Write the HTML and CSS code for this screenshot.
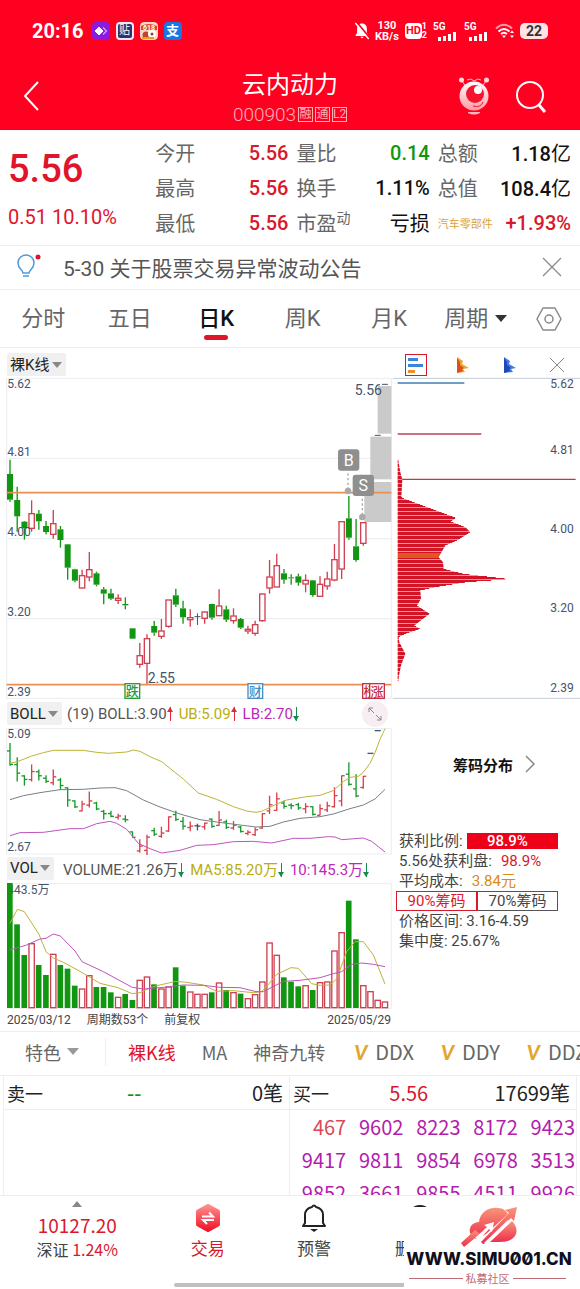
FILE: index.html
```
<!DOCTYPE html>
<html lang="zh-CN">
<head>
  <meta charset="UTF-8">
  <meta name="viewport" content="width=device-width, initial-scale=1.0">
  <title>云内动力 000903</title>
  <link rel="stylesheet" href="styles.css">
</head>
<body>

  <!-- Header -->
  <header class="header">
    <div class="status-bar">
      <span class="clock">20:16</span>
      <svg class="app-icon" viewBox="0 0 18 18"><rect width="18" height="18" rx="4" fill="#8a1be0"/><path d="M7 5l4 4-4 4-4-4z" fill="#fff" stroke="#fff" stroke-linejoin="round"/><path d="M11 5.500l3.500 3.500-3.500 3.500" fill="none" stroke="#d9a8ff" stroke-width="1.200"/></svg>
      <span class="app-icon app-tie">贴</span>
      <svg class="app-icon" viewBox="0 0 18 18"><rect width="18" height="18" rx="4" fill="#f6d9c4"/><path d="M1 4q8-4 16 0v4H1z" fill="#e2452f"/><text x="9" y="8" font-size="7" font-weight="700" text-anchor="middle" fill="#fff">618</text><circle cx="6" cy="13" r="3.500" fill="#c7422a"/><circle cx="12" cy="12" r="4" fill="#fff"/><circle cx="12" cy="12" r="1.500" fill="#8a4a30"/><path d="M2 16h12" stroke="#e0a020" stroke-width="2"/></svg>
      <span class="app-icon app-pay">支</span>
      <span class="spacer"></span>
      <svg class="mute" viewBox="0 0 18 20"><path d="M9 1.500c3.800 0 5.500 2.700 5.500 6v4.500l2 3.500h-15l2-3.500V7.500c0-3.300 1.700-6 5.500-6zM7 16.500h4l-2 2z" fill="#fff"/><path d="M3 0l15 18" stroke="#ff0020" stroke-width="2"/><path d="M1.500 1l15 18" stroke="#fff" stroke-width="1.500"/></svg>
      <span class="speed">130<br>KB/s</span>
      <span class="hd"><b>HD</b><i>1<br>2</i></span>
      <span class="signal">5G<svg viewBox="0 0 20 9"><path d="M1 5h3v4H1zM6 4h3v5H6zM11 2h3v7h-3zM16 0h3v9h-3z" fill="#fff"/></svg></span>
      <span class="signal">5G<svg viewBox="0 0 20 9"><path d="M1 5h3v4H1zM6 4h3v5H6zM11 2h3v7h-3zM16 0h3v9h-3z" fill="#fff"/></svg></span>
      <svg class="wifi" viewBox="0 0 20 18"><g fill="none" stroke="#fff" stroke-width="2"><path d="M1 6.500q8-7.500 16 0" opacity=".6"/><path d="M3.500 9.500q5.500-5 11 0"/><path d="M6 12q3-2.500 6 0"/></g><path d="M7 13.500h4l-2 2.500zM15 11l2-2.500 2 2.500zM15 13.500h4l-2 2.500z" fill="#fff"/></svg>
      <span class="battery">22</span>
    </div>
    <nav class="nav">
      <button class="icon-button" aria-label="返回"><svg width="20" height="34" viewBox="0 0 20 34"><path d="M16 3L3 17l13 14" fill="none" stroke="#fff" stroke-width="2"/></svg></button>
      <div class="title">
        <h1>云内动力</h1>
        <p>000903<span class="tag">融</span><span class="tag">通</span><span class="tag">L2</span></p>
      </div>
      <button class="icon-button robot" aria-label="助手"><svg width="32" height="40" viewBox="0 0 32 40"><defs><linearGradient id="ball" x2="0" y2="1"><stop offset="0" stop-color="#fff"/><stop offset="1" stop-color="#ff9aa2"/></linearGradient></defs><path d="M4 5l4 6M28 5l-4 6M9 4l4-1 3 2 4-2 3 1" fill="none" stroke="#ffc4c8"/><circle cx="3.500" cy="4" r="2.500" fill="#ffd9dc"/><circle cx="28.500" cy="4" r="2.500" fill="#ffd9dc"/><circle cx="16" cy="20" r="14.500" fill="url(#ball)"/><circle cx="17" cy="18" r="9" fill="#f5142e"/><circle cx="20" cy="14" r="4" fill="#fff"/><path d="M15 30q8 2 10-4" fill="none" stroke="#e8182c"/><path d="M10 36h12v1q-6 3-12 0z" fill="#ffb9be"/></svg></button>
      <button class="icon-button" aria-label="搜索"><svg width="32" height="34" viewBox="0 0 32 34"><circle cx="15" cy="16" r="13" fill="none" stroke="#fff" stroke-width="2"/><path d="M24 26l6 7" stroke="#fff" stroke-width="3"/></svg></button>
    </nav>
  </header>

  <!-- Quote -->
  <section class="quote">
    <div class="price">
      <strong>5.56</strong>
      <span>0.51 10.10%</span>
    </div>
    <dl class="figures">
      <div><dt>今开</dt><dd class="up">5.56</dd></div>
      <div><dt>量比</dt><dd class="down">0.14</dd></div>
      <div><dt>总额</dt><dd>1.18<span>亿</span></dd></div>
      <div><dt>最高</dt><dd class="up">5.56</dd></div>
      <div><dt>换手</dt><dd>1.11%</dd></div>
      <div><dt>总值</dt><dd>108.4<span>亿</span></dd></div>
      <div><dt>最低</dt><dd class="up">5.56</dd></div>
      <div><dt>市盈<sup>动</sup></dt><dd><span>亏损</span></dd></div>
      <div><dt class="sector">汽车零部件</dt><dd class="up">+1.93%</dd></div>
    </dl>
  </section>

  <!-- Notice -->
  <section class="notice">
    <svg width="28" height="26" viewBox="0 0 28 26"><path d="M8 19c0-3-5-4-5-10a8 8 0 0 1 16 0c0 6-5 7-5 10z M8 22h6" fill="none" stroke="#4a9ae0" stroke-width="1.500"/><circle cx="23" cy="3" r="2.500" fill="#d8182c"/></svg>
    <a href="#notice">5-30 关于股票交易异常波动公告</a>
    <button class="icon-button" aria-label="关闭"><svg width="20" height="20" viewBox="0 0 20 20"><path d="M1 1l18 18M19 1L1 19" stroke="#888" stroke-width="1.200"/></svg></button>
  </section>

  <!-- Period tabs -->
  <nav class="tabs">
    <button>分时</button>
    <button>五日</button>
    <button class="active">日K</button>
    <button>周K</button>
    <button>月K</button>
    <label class="dropdown"><select aria-label="周期"><option>周期</option></select></label>
    <button aria-label="设置"><svg width="26" height="26" viewBox="0 0 26 26" fill="none" stroke="#888" stroke-width="1.500"><path d="M7 2h12l6 11-6 11H7L1 13z" stroke-linejoin="round"/><circle cx="13" cy="13" r="4"/></svg></button>
  </nav>

  <!-- Charts -->
  <main class="charts">
    <div class="chart-column">
      <div class="toolbar">
        <label class="dropdown chip"><select aria-label="主图"><option>裸K线</option></select></label>
      </div>
      <svg id="candles" viewBox="0 0 1176 972"></svg>

      <div class="toolbar boll">
        <label class="dropdown chip"><select aria-label="指标"><option>BOLL</option></select></label>
        <span>(19) BOLL:3.90<i class="arrow-up"></i></span>
        <span class="yellow">UB:5.09<i class="arrow-up"></i></span>
        <span class="purple">LB:2.70<i class="arrow-down"></i></span>
        <button class="expand" aria-label="展开"><svg width="16" height="16" viewBox="0 0 16 16" fill="none" stroke="#888"><path d="M7 7L2 2M2 6V2h4M9 9l5 5M14 10v4h-4"/></svg></button>
      </div>
      <svg id="boll" viewBox="0 84 1176 381"></svg>

      <div class="toolbar vol">
        <label class="dropdown chip"><select aria-label="副图"><option>VOL</option></select></label>
        <span>VOLUME:21.26万<i class="arrow-down"></i></span>
        <span class="yellow">MA5:85.20万<i class="arrow-down"></i></span>
        <span class="purple">10:145.3万<i class="arrow-down"></i></span>
      </div>
      <svg id="volume" viewBox="0 84 1176 378"></svg>

      <div class="dates">
        <span>2025/03/12</span>
        <span>周期数53个</span>
        <span>前复权</span>
        <span>2025/05/29</span>
      </div>
    </div>

    <aside class="chips">
      <div class="chip-tools">
        <button class="selected" aria-label="筹码"><svg width="16" height="16" viewBox="0 0 16 16"><path d="M0 1h10v3H0z" fill="#3c86d8"/><path d="M0 7h15v3H0z" fill="#3c86d8"/><path d="M0 13h7v3H0z" fill="#e8922c"/></svg></button>
        <button aria-label="火焰筹码"><svg width="12" height="16" viewBox="0 0 12 16"><path d="M0 0l6 4-1 3 7 4-6 1 2 3-8 1z" fill="#f5a030"/><path d="M0 1l3 4v3l4 3-2 1 1 2-6 2z" fill="#d8501c"/></svg></button>
        <button aria-label="活跃筹码"><svg width="12" height="16" viewBox="0 0 12 16"><path d="M0 0l6 4-1 3 7 4-5 1 2 3-9 1z" fill="#3f7be8"/><path d="M0 1l3 4v3l4 3-2 1 1 2-6 2z" fill="#2347b8"/></svg></button>
        <button aria-label="关闭筹码"><svg width="16" height="16" viewBox="0 0 16 16"><path d="M1 1l14 14M15 1L1 15" stroke="#888"/></svg></button>
      </div>
      <svg id="profile" viewBox="6 0 564 972"></svg>
      <a class="chip-link" href="#chips">筹码分布<svg width="10" height="18" viewBox="0 0 10 18"><path d="M1 1l8 8-8 8" fill="none" stroke="#888" stroke-width="1.500"/></svg></a>
      <div class="chip-info">
        <p>获利比例:<span class="meter">98.9%</span></p>
        <p>5.56处获利盘: <span class="value up">98.9%</span></p>
        <p>平均成本: <span class="value orange">3.84元</span></p>
        <div class="switch"><button class="selected">90%筹码</button><button>70%筹码</button></div>
        <p>价格区间: 3.16-4.59</p>
        <p>集中度: 25.67%</p>
      </div>
    </aside>
  </main>

  <!-- Indicators -->
  <nav class="indicators">
    <label class="dropdown"><select aria-label="特色"><option>特色</option></select></label>
    <button class="active">裸K线</button>
    <button>MA</button>
    <button>神奇九转</button>
    <button class="vip"><b>V</b>DDX</button>
    <button class="vip"><b>V</b>DDY</button>
    <button class="vip"><b>V</b>DDZ</button>
  </nav>

  <!-- Orders -->
  <section class="orders">
    <div class="side">
      <div class="best"><span>卖一</span><span class="down">--</span><span>0笔</span></div>
    </div>
    <div class="side">
      <div class="best"><span>买一</span><span class="up">5.56</span><span>17699笔</span></div>
      <table>
        <tr><td class="small">467</td><td>9602</td><td>8223</td><td>8172</td><td>9423</td></tr>
        <tr><td>9417</td><td>9811</td><td>9854</td><td>6978</td><td>3513</td></tr>
        <tr><td>9852</td><td>3661</td><td>9855</td><td>4511</td><td>9926</td></tr>
      </table>
    </div>
  </section>

  <!-- Bottom bar -->
  <footer class="bottom">
    <a class="index" href="#index">
      <i class="triangle"></i>
      <strong>10127.20</strong>
      <span>深证 <em>1.24%</em></span>
    </a>
    <a class="trade" href="#trade">
      <svg width="26" height="28" viewBox="0 0 26 28"><defs><linearGradient id="hex" x2="0" y2="1"><stop offset="0" stop-color="#ff8c88"/><stop offset="1" stop-color="#f0142c"/></linearGradient></defs><path d="M13 2l10 5.500v13L13 26 3 20.500v-13z" fill="url(#hex)" stroke="url(#hex)" stroke-width="4" stroke-linejoin="round"/><path d="M7 12.500h11l-4-4M19 16H8l4 4" fill="none" stroke="#fff" stroke-width="2"/></svg>
      <span>交易</span>
    </a>
    <a href="#alert">
      <svg width="26" height="28" viewBox="0 0 26 28"><path d="M4 19V11c0-5 3-7 7-8q2-3 4 0c4 1 7 3 7 8v8l2 3H2z" fill="none" stroke="#222" stroke-width="2" stroke-linejoin="round"/><path d="M9 25h8l-4 3z" fill="#222"/></svg>
      <span>预警</span>
    </a>
    <a href="#remove">
      <svg width="26" height="28" viewBox="0 0 26 28"><circle cx="13" cy="14" r="12" fill="none" stroke="#222" stroke-width="2"/><path d="M7 14h12" stroke="#222" stroke-width="2"/></svg>
      <span>删自选</span>
    </a>
    <i class="home-line"></i>
    <div class="watermark">
      <svg width="58" height="40" viewBox="0 0 58 40"><defs><linearGradient id="cloud" x2="0" y2="1"><stop offset="0" stop-color="#f89478"/><stop offset="1" stop-color="#ec2f50"/></linearGradient></defs><g fill="url(#cloud)"><path d="M13 30c-5-4-5-14 6-15C20 4 31 0 38 1c5 0 8 3 10 6l-22 20-10 5z"/><path d="M57 0l-3 14-3-3-26 26h-2l-2-2L49 6l-4-3z"/><path d="M30 35l22-21c6 6 6 14 0 18-4 3-10 3-22 3z"/><path d="M1 36l14-13 5 4L4 40z"/></g><path d="M15 31l12-11-3-2 10-3-2 10-3-3-10 11z" fill="#fff"/><path d="M25 37l24-23" stroke="#fff" stroke-width="3"/></svg>
      <strong>WWW.SIMU001.CN</strong>
      <span class="caption">私募社区</span>
    </div>
  </footer>

  <script src="charts.js"></script>

</body>
</html>
```
FILE: styles.css
```
/* General Styles */
* {
  box-sizing: border-box;
}

body {
  margin: 0;
  font-family: Roboto, "Noto Sans CJK SC", sans-serif;
  background-color: #ffffff;
  color: #111111;
}

button,
select {
  font: inherit;
  color: inherit;
  background: none;
  border: none;
  padding: 0;
  margin: 0;
  cursor: pointer;
}

a {
  color: inherit;
  text-decoration: none;
}

p,
h1,
dl,
dd {
  margin: 0;
}

svg {
  display: block;
}

.up {
  color: #d8182c;
}

.down {
  color: #0f970f;
}

.yellow {
  color: #b8ad12;
}

.purple {
  color: #bb27bb;
}

.orange {
  color: #dc8a10;
}

/* Header */
.header {
  background: #ff0020;
  color: #ffffff;
  height: 130px;
}

.status-bar {
  display: flex;
  align-items: center;
  height: 62px;
  padding: 0 32px;
}

.clock {
  font-size: 20px;
  font-weight: 700;
  margin-right: 8px;
}

.app-icon {
  width: 18px;
  height: 18px;
  margin-right: 6px;
  border-radius: 4px;
  font-size: 11px;
  line-height: 18px;
  text-align: center;
}

.app-tie {
  background: #2a3270;
  border: 2px solid #f4e6f4;
  line-height: 14px;
}

.app-pay {
  background: #1677e6;
  font-size: 13px;
  font-weight: 700;
}

.spacer {
  flex: 1;
}

.mute {
  width: 16px;
  height: 20px;
  margin-right: 5px;
}

.speed {
  width: 24px;
  font-size: 11px;
  font-weight: 700;
  line-height: 11px;
  text-align: center;
  margin-right: 6px;
}

.hd {
  display: flex;
  align-items: center;
  margin-right: 6px;
}

.hd b {
  background: #ffffff;
  color: #ff0020;
  border-radius: 4px;
  font-size: 11px;
  line-height: 16px;
  padding: 0 1px;
}

.hd i {
  font-size: 9px;
  font-style: normal;
  font-weight: 700;
  line-height: 9px;
}

.signal {
  width: 24px;
  font-size: 10px;
  font-weight: 700;
  line-height: 10px;
  margin-right: 7px;
}

.signal svg {
  width: 20px;
  height: 9px;
  margin-left: 4px;
}

.wifi {
  width: 20px;
  height: 18px;
  margin-right: 5px;
}

.battery {
  background: #ffe3e5;
  color: #333333;
  border-radius: 5px;
  width: 28px;
  font-size: 14px;
  font-weight: 700;
  line-height: 16px;
  text-align: center;
}

.nav {
  display: grid;
  grid-template-columns: 20px 1fr 32px 32px;
  column-gap: 25px;
  height: 66px;
  padding: 0 33px 0 22px;
  align-items: center;
}

.title {
  text-align: center;
  padding: 9px 0 0 80px;
}

.title h1 {
  font-size: 24px;
  font-weight: 400;
  line-height: 29px;
}

.title p {
  display: flex;
  justify-content: center;
  align-items: center;
  gap: 2px;
  font-size: 19px;
  font-weight: 300;
  line-height: 29px;
  color: #ffb0b8;
}

.tag {
  border: 1px solid #ffb0b8;
  width: 15px;
  height: 15px;
  font-size: 12px;
  font-weight: 400;
  line-height: 13px;
  text-align: center;
}

/* Quote */
.quote {
  display: grid;
  grid-template-columns: 139fr 415fr;
  column-gap: 8px;
  padding: 5px 9px 5px 8px;
  border-bottom: 1px solid #eeeeee;
}

.price {
  color: #e0142a;
}

.price strong {
  display: block;
  font-size: 38px;
  font-weight: 500;
  line-height: 68px;
}

.price span {
  font-size: 20px;
  line-height: 28px;
  white-space: nowrap;
}

.figures {
  display: grid;
  grid-template-columns: repeat(3, 1fr);
  column-gap: 8px;
}

.figures div {
  display: flex;
  justify-content: space-between;
  align-items: center;
  height: 35px;
  font-size: 20px;
  white-space: nowrap;
}

.figures dt {
  color: #666666;
}

.figures dd {
  font-weight: 500;
}

.figures dd span {
  font-weight: 400;
}

.figures sup {
  font-size: 14px;
  line-height: 14px;
}

.figures .sector {
  color: #dba23a;
  font-size: 11px;
}

/* Notice */
.notice {
  display: flex;
  align-items: center;
  height: 44px;
  padding: 0 18px 2px 15px;
  border-bottom: 1px solid #eeeeee;
  font-size: 21px;
  color: #555555;
}

.notice a {
  flex: 1;
  margin-left: 20px;
}

/* Period tabs */
.tabs {
  display: grid;
  grid-template-columns: repeat(6, 17fr) 12fr;
  align-items: center;
  justify-items: center;
  height: 58px;
  border-bottom: 1px solid #eeeeee;
  font-size: 22px;
  line-height: 32px;
  color: #666666;
}

.tabs .active {
  position: relative;
  color: #111111;
  font-weight: 500;
}

.tabs .active::after {
  content: "";
  position: absolute;
  left: 50%;
  bottom: -5px;
  width: 24px;
  height: 5px;
  margin-left: -12px;
  border-radius: 3px;
  background: #e0142a;
}

.dropdown {
  display: inline-flex;
  align-items: center;
}

.dropdown select {
  appearance: none;
}

.dropdown::after {
  content: "";
  border: 6px solid transparent;
  border-top: 7px solid #333333;
  border-bottom: none;
  margin-left: 6px;
}

.dropdown.chip {
  background: #f0f0f0;
  color: #222222;
  border-radius: 2px;
  height: 23px;
  padding: 0 4px 0 3px;
}

.dropdown.chip::after {
  border-width: 6px 5px 0;
  border-top-color: #888888;
  margin-left: 2px;
}

/* Charts */
.charts {
  display: grid;
  grid-template-columns: 392fr 188fr;
  border-bottom: 1px solid #eeeeee;
}

.chart-column > svg,
.chips > svg {
  width: 100%;
  height: auto;
}

.chart-column text,
.chips text {
  font-size: 36px;
  fill: #44546a;
}

.toolbar {
  display: flex;
  align-items: center;
  gap: 5px;
  height: 28px;
  padding: 0 0 2px 7px;
  font-size: 15px;
  color: #555555;
  white-space: nowrap;
}

.toolbar:first-child {
  height: 27px;
  padding: 6px 0 0 7px;
}

.toolbar.boll {
  height: 29px;
  padding-bottom: 0;
}

.vol .chip {
  margin-right: 4px;
}

.arrow-up,
.arrow-down {
  display: inline-block;
  width: 1px;
  height: 14px;
  margin: 0 3px;
  position: relative;
  vertical-align: -2px;
  background: #e02a3a;
}

.arrow-down {
  background: #148c4c;
}

.arrow-up::after,
.arrow-down::after {
  content: "";
  position: absolute;
  left: -3px;
  top: 0;
  border: 3px solid transparent;
  border-top: none;
  border-bottom: 5px solid #e02a3a;
}

.arrow-down::after {
  top: auto;
  bottom: 0;
  border-top: 5px solid #148c4c;
  border-bottom: none;
}

.expand {
  display: flex;
  align-items: center;
  justify-content: center;
  width: 26px;
  height: 26px;
  margin: 0 4px 0 auto;
  border-radius: 50%;
  background: #f6eef2;
}

.dates {
  display: flex;
  gap: 16px;
  height: 22px;
  padding: 0 1px 0 7px;
  font-size: 12px;
  line-height: 22px;
  color: #444444;
}

.dates span:last-child {
  margin-left: auto;
}

/* Chip distribution */
.chip-tools {
  display: grid;
  grid-template-columns: repeat(4, 1fr);
  align-items: center;
  justify-items: center;
  height: 27px;
  padding-top: 6px;
}

.chip-tools .selected {
  padding: 2px;
  border: 1px solid #d8182c;
}

.chip-link {
  display: flex;
  justify-content: center;
  align-items: center;
  gap: 12px;
  height: 132px;
  padding: 0 0 2px 16px;
  font-size: 15px;
  font-weight: 700;
  color: #111111;
}

.chip-info {
  padding: 0 22px 0 7px;
  font-size: 15px;
  line-height: 20px;
  color: #444444;
  white-space: nowrap;
}

.chip-info p {
  display: flex;
  align-items: center;
  gap: 4px;
}

.chip-info .value {
  margin-left: 5px;
}

.meter {
  flex: 1;
  background: #ee0018;
  color: #ffffff;
  font-weight: 500;
  line-height: 16px;
  padding-right: 10px;
  text-align: center;
}

.switch {
  display: grid;
  grid-template-columns: 1fr 1fr;
  height: 20px;
  margin: 0 0 0 -3px;
  line-height: 18px;
}

.switch button {
  border: 1px solid #555555;
}

.switch .selected {
  border-color: #d8182c;
  color: #d8182c;
}

/* Indicators */
.indicators {
  display: flex;
  align-items: center;
  height: 43px;
  padding: 0 0 4px 25px;
  overflow: hidden;
  font-family: "Noto Sans CJK SC", sans-serif;
  font-size: 18px;
  line-height: 28px;
  color: #666666;
  white-space: nowrap;
}

.indicators button {
  flex: none;
  margin-right: 26px;
}

.indicators .vip {
  margin: 0 0 0 3px;
  padding-right: 24px;
  font-size: 20px;
}

.indicators .dropdown {
  margin-right: 22px;
  padding-right: 26px;
  border-right: 1px solid #eeeeee;
}

.indicators .dropdown::after {
  border-top-color: #999999;
}

.indicators .active {
  color: #e0142a;
}

.indicators b {
  margin-right: 8px;
  font-family: Lato, sans-serif;
  font-style: italic;
  font-weight: 900;
  color: #e3a52c;
}

/* Orders */
.orders {
  display: grid;
  grid-template-columns: 1fr 1fr;
  height: 121px;
  overflow: hidden;
  padding: 0 3px;
  border-top: 1px solid #eeeeee;
  border-bottom: 1px solid #eeeeee;
  font-family: "Noto Sans CJK SC", sans-serif;
  font-size: 20px;
}

.side {
  border-right: 1px solid #eeeeee;
}

.side:first-child {
  border-left: 1px solid #eeeeee;
}

.best {
  display: grid;
  grid-template-columns: 1fr 1fr 1fr;
  align-items: center;
  height: 34px;
  padding: 0 6px 0 3px;
  border-bottom: 1px solid #eeeeee;
  color: #222222;
}

.best span:first-child {
  font-size: 18px;
}

.best .up {
  padding-left: 4px;
}

.best .down {
  padding-left: 28px;
  font-weight: 500;
}

.best span:last-child {
  text-align: right;
}

.orders table {
  width: 100%;
  table-layout: fixed;
  border-spacing: 0;
  line-height: 33px;
  color: #b41cae;
}

.orders td {
  padding: 0 1px 0 0;
  text-align: right;
}

.orders .small {
  color: #d84a55;
}

/* Bottom bar */
.bottom {
  position: relative;
  display: grid;
  grid-template-columns: 77fr repeat(4, 53fr);
  height: 93px;
  padding-top: 8px;
  overflow: hidden;
  font-family: "Noto Sans CJK SC", sans-serif;
  font-size: 17px;
  line-height: 25px;
  color: #444444;
}

.bottom a {
  display: flex;
  flex-direction: column;
  align-items: center;
}

.bottom a svg {
  margin-bottom: 3px;
}

.bottom .trade,
.bottom strong,
.bottom em {
  color: #d8182c;
  font-style: normal;
}

.bottom .index {
  margin-top: -3px;
  font-size: 16px;
}

.index strong {
  font-size: 19px;
  font-weight: 400;
}

.triangle {
  border: 5px solid transparent;
  border-top: none;
  border-bottom: 6px solid #888888;
  margin-bottom: 5px;
}

.home-line {
  position: absolute;
  left: 30%;
  right: 30%;
  bottom: 2px;
  height: 4px;
  border-radius: 2px;
  background: #c0c0c0;
}

.watermark {
  position: absolute;
  top: 11px;
  right: 0;
  bottom: 0;
  width: 176px;
  padding: 0 9px 0 3px;
  background: #ffffff;
}

.watermark svg {
  margin: 0 auto;
}

.watermark .caption {
  padding: 0 5px 0 2px;
}

.watermark strong {
  display: flex;
  justify-content: center;
  font-family: Inter, sans-serif;
  font-feature-settings: "zero";
  font-size: 17px;
  font-weight: 800;
  line-height: 25px;
  color: #10101c;
}

.caption {
  display: flex;
  align-items: center;
  gap: 3px;
  font-size: 11px;
  line-height: 12px;
  color: #c06a74;
}

.caption::before,
.caption::after {
  content: "";
  flex: 1;
  height: 1px;
  background: #c06a74;
}
```
FILE: charts.js
```
// All y values are in viewBox units, three units per pixel at full width
const GREEN = '#109610';
const RED = '#cf4050';
const SLATE = '#44546a';

// high, body top, body bottom, low, colour (g = down, r = up, n = flat)
const days = [
  [254, 297, 374, 380, 'g'], [335, 375, 424, 470, 'g'], [438, 440, 460, 494, 'g'],
  [376, 415, 461, 470, 'r'], [405, 416, 439, 464, 'g'], [438, 453, 471, 478, 'g'],
  [405, 445, 479, 491, 'r'], [453, 463, 495, 518, 'g'], [507, 508, 578, 614, 'g'],
  [581, 583, 617, 622, 'g'], [584, 601, 640, 640, 'r'], [531, 583, 607, 619, 'r'],
  [590, 595, 629, 634, 'g'], [636, 643, 656, 688, 'g'], [641, 655, 671, 675, 'g'],
  [658, 669, 677, 687, 'r'], [667, 687, 691, 703, 'g'], [760, 760, 791, 791, 'g'],
  [804, 841, 869, 878, 'r'], [778, 790, 866, 928, 'r'], [738, 753, 773, 782, 'g'],
  [732, 767, 785, 792, 'r'], [674, 674, 755, 758, 'r'], [641, 661, 689, 696, 'g'],
  [677, 700, 727, 746, 'g'], [703, 727, 735, 755, 'r'], [715, 725, 727, 750, 'n'],
  [709, 710, 731, 746, 'r'], [686, 687, 728, 734, 'g'], [643, 692, 723, 723, 'r'],
  [692, 703, 734, 741, 'g'], [700, 722, 738, 746, 'r'], [729, 732, 758, 762, 'g'],
  [752, 762, 769, 777, 'r'], [737, 748, 776, 782, 'r'], [655, 656, 738, 740, 'r'],
  [555, 605, 640, 656, 'r'], [536, 571, 637, 637, 'r'], [582, 595, 614, 626, 'g'],
  [598, 607, 610, 629, 'g'], [596, 604, 623, 632, 'g'], [598, 615, 628, 652, 'r'],
  [615, 616, 660, 665, 'g'], [604, 627, 665, 665, 'r'], [590, 611, 634, 644, 'r'],
  [507, 553, 616, 619, 'r'], [439, 439, 583, 612, 'r'], [363, 430, 488, 494, 'g'],
  [432, 514, 555, 560, 'g'], [442, 442, 506, 512, 'r'], [311, 311, 311, 311, 'n'],
  [181, 181, 181, 181, 'n'], [28, 28, 28, 28, 'n']
];

const volumes = [
  84, 208, 300, 265, 330, 360, 297, 330, 341, 392, 401, 361, 396, 396, 412, 426, 417, 435,
  375, 365, 388, 401, 395, 337, 392, 410, 417, 417, 412, 383, 405, 412, 416, 430, 418, 380,
  263, 300, 367, 380, 394, 391, 405, 382, 380, 287, 232, 137, 253, 391, 409, 435, 440
];

const upper = [30,190, 52,185, 95,168, 130,158, 160,151, 250,151, 290,157, 325,160, 380,156, 400,150, 420,154, 450,170, 485,185, 550,237, 595,279, 650,298, 700,320, 740,333, 768,337, 785,334, 830,312, 860,300, 920,290, 960,286, 1000,272, 1030,245, 1050,232, 1075,229, 1090,217, 1110,190, 1125,158, 1140,118, 1155,86];
const middle = [30,299, 70,287, 120,278, 180,269, 250,268, 300,264, 345,263, 380,272, 430,300, 480,321, 540,342, 600,359, 650,366, 720,375, 768,381, 810,379, 850,366, 900,355, 960,350, 1000,342, 1050,326, 1090,315, 1125,297, 1155,268];
const lower = [30,407, 60,398, 130,397, 210,386, 250,386, 290,371, 330,364, 350,370, 380,388, 415,430, 450,446, 485,459, 540,451, 590,436, 640,434, 700,425, 760,424, 815,429, 880,415, 930,415, 985,410, 1005,411, 1025,419, 1090,414, 1115,424, 1135,440, 1155,456];
const ma5 = [30,205, 52,163, 73,170, 117,238, 138,290, 160,309, 190,322, 240,349, 300,385, 354,398, 397,416, 420,413, 462,394, 527,379, 560,382, 610,390, 650,409, 700,407, 760,413, 785,410, 808,385, 830,358, 873,338, 895,340, 935,386, 960,391, 990,390, 1010,372, 1040,290, 1065,260, 1090,260, 1120,300, 1155,387];
const ma10 = [30,285, 80,270, 120,252, 138,250, 160,237, 181,243, 225,288, 246,320, 310,350, 354,374, 397,397, 430,402, 500,396, 549,390, 610,391, 660,397, 720,398, 768,410, 790,410, 850,379, 900,376, 960,368, 1000,356, 1025,350, 1055,328, 1085,324, 1120,328, 1155,335];

// y, right edge of the chip profile
const chips = [[255, 24], [290, 30], [313, 36], [364, 33], [368, 38], [427, 197], [438, 182], [455, 225], [470, 240], [495, 200], [510, 165], [545, 145], [560, 158], [580, 160], [595, 220], [611, 360], [620, 230], [635, 135], [645, 90], [670, 92], [690, 80], [715, 118], [730, 98], [750, 72], [760, 90], [775, 45], [785, 25], [800, 27], [835, 45], [870, 32], [900, 26], [917, 24]];

function x(i) {
  return 30 + i * 21.63;
}

function line(x1, y1, x2, y2, color, width) {
  return `<line x1="${x1}" y1="${y1}" x2="${x2}" y2="${y2}" stroke="${color}" stroke-width="${width || 3}"/>`;
}

function rect(left, top, width, height, fill, stroke) {
  return `<rect x="${left}" y="${top}" width="${width}" height="${height}" fill="${fill}" stroke="${stroke || 'none'}" stroke-width="4"/>`;
}

function label(left, y, text) {
  return `<text x="${left}" y="${y}">${text}</text>`;
}

function curve(points, color) {
  return `<polyline points="${points.join(' ')}" fill="none" stroke="${color}" stroke-width="3" stroke-linejoin="round"/>`;
}

function badge(left, text, color) {
  return rect(left, 926, 44, 44, '#fff', color) +
    `<text x="${left + 22}" y="962" text-anchor="middle" style="font-size:39px;font-weight:500;fill:${color}">${text}</text>`;
}

function marker(cx, cy, dotX, dotY, text) {
  return `<line x1="${dotX}" y1="${cy + 40}" x2="${dotX}" y2="${dotY}" stroke="#aaa" stroke-width="4" stroke-dasharray="7 7"/>` +
    `<circle cx="${dotX}" cy="${dotY}" r="10" fill="#aaa"/>` +
    `<rect x="${cx - 32}" y="${cy - 32}" width="64" height="64" rx="9" fill="#8f8f8f"/>` +
    `<text x="${cx}" y="${cy + 17}" text-anchor="middle" style="font-size:48px;fill:#fff">${text}</text>`;
}

// Main candle chart
function drawCandles() {
  let out = '';
  [10, 250, 491, 731, 970].forEach(y => out += line(20, y, 1174, y, '#e9edf0'));
  out += line(20, 10, 20, 970, '#e9edf0') + line(1174, 10, 1174, 970, '#e9edf0');
  out += rect(1093, 321, 81, 120, '#cacaca') + rect(1111, 185, 63, 128, '#cacaca') + rect(1133, 33, 41, 143, '#cacaca');

  days.forEach(([high, top, bottom, low, type], i) => {
    if (i === 50) return; // hidden between the projected bars
    const color = { g: GREEN, r: RED, n: SLATE }[type];
    const cx = x(i);
    if (type === 'n') {
      out += line(cx, high, cx, low, color) + line(cx - 9, top, cx + 9, top, color);
      return;
    }
    out += line(cx, high, cx, top, color, 4) + line(cx, bottom, cx, low, color, 4);
    out += type === 'g'
      ? rect(cx - 9, top, 18, bottom - top, color)
      : rect(cx - 8, top + 1, 16, bottom - top - 2, '#fff', color);
  });

  out += line(20, 353, 1174, 353, '#ea8f52', 5) + line(20, 929, 1174, 929, '#ea8f52', 5);
  out += label(22, 40, '5.62') + label(22, 242, '4.81') + label(22, 482, '4.00') + label(22, 722, '3.20') + label(22, 962, '2.39');
  out += `<text x="443" y="923" style="font-size:42px">2.55</text>`;
  out += `<text x="1064" y="60" style="font-size:42px">5.56</text>`;
  out += marker(1046, 255, 1044, 348, 'B') + marker(1090, 331, 1087, 426, 'S');
  out += badge(375, '跌', '#2a9a3a') + badge(744, '财', '#4a90c8') + badge(1088, '榜', '#c83040') + badge(1109, '涨', '#c83040');
  document.getElementById('candles').innerHTML = out;
}

// Same days as open/close bars, with the three bands
function drawBoll() {
  const scale = y => y * 0.5245 - 3;
  let out = line(20, 86, 1174, 86, '#e9edf0') + line(20, 462, 1174, 462, '#e9edf0');
  out += line(20, 86, 20, 462, '#e9edf0') + line(1174, 86, 1174, 462, '#e9edf0');
  out += label(22, 113, '5.09') + label(22, 452, '2.67');
  days.forEach(([high, top, bottom, low, type], i) => {
    const color = { g: '#159a2c', r: '#d8404c', n: SLATE }[type];
    const open = scale(type === 'r' ? bottom : top);
    const close = scale(type === 'r' ? top : bottom);
    out += line(x(i), scale(high) - 1, x(i), scale(low) + 1, color, 4);
    out += line(x(i) - 9, open, x(i), open, color, 4) + line(x(i), close, x(i) + 9, close, color, 4);
  });
  out += curve(upper, '#bdb436') + curve(middle, '#777f84') + curve(lower, '#bd55bd');
  document.getElementById('boll').innerHTML = out;
}

function drawVolume() {
  let out = line(20, 86, 1174, 86, '#e9edf0') + line(20, 460, 1174, 460, '#e9edf0') + line(1174, 86, 1174, 460, '#e9edf0');
  out += label(22, 116, '443.5万');
  volumes.forEach((top, i) => {
    out += days[i][4] === 'g'
      ? rect(x(i) - 9, top, 17, 459 - top, GREEN)
      : rect(x(i) - 8, top + 1, 16, 457 - top, '#fff', RED);
  });
  out += curve(ma5, '#bdb436') + curve(ma10, '#bd55bd');
  document.getElementById('volume').innerHTML = out;
}

// Width of the chip profile at a height
function edge(y) {
  for (let i = 1; i < chips.length; i++) {
    const [y0, x0] = chips[i - 1];
    const [y1, x1] = chips[i];
    if (y <= y1) return x0 + (x1 - x0) * (y - y0) / (y1 - y0);
  }
  return 24;
}

function drawProfile() {
  let out = line(8, 10, 570, 10, '#c3ccd4') + line(8, 970, 570, 970, '#c3ccd4');
  out += line(23, 24, 223, 24, '#3f7cb0', 4) + line(23, 177, 274, 177, '#b84454', 4) + line(23, 313, 557, 313, '#c83444', 4);
  for (let y = 255; y < 917; y += 3) {
    const gap = (y - 255) % 12 === 9;
    const color = y > 533 && y < 548 ? '#dc5a20' : gap ? '#f2989e' : '#d41426';
    out += rect(23, y, edge(y) - 22, 3, color);
  }
  [[40, '5.62'], [238, '4.81'], [475, '4.00'], [712, '3.20'], [950, '2.39']].forEach(([y, text]) => out += label(481, y, text));
  document.getElementById('profile').innerHTML = out;
}

drawCandles();
drawBoll();
drawVolume();
drawProfile();
```
